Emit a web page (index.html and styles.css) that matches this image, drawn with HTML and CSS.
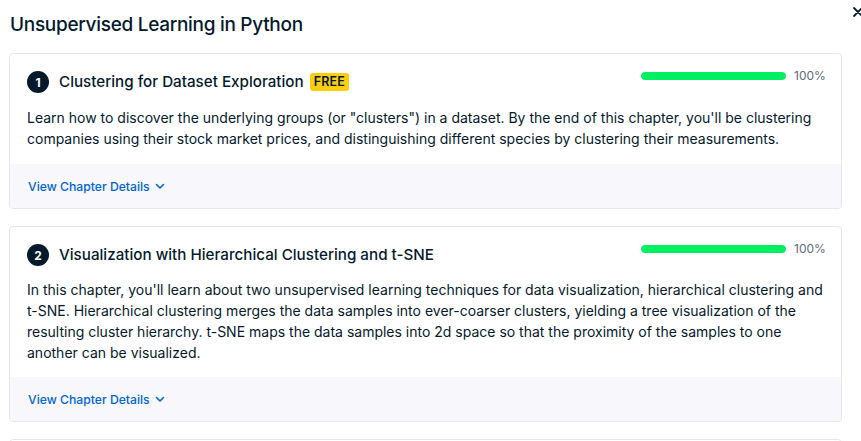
FILE: index.html
```html
<!DOCTYPE html>
<html lang="en">
<head>
<meta charset="utf-8">
<title>Unsupervised Learning in Python</title>
<link rel="stylesheet" href="styles.css">
</head>
<body>
<div class="page">
  <header class="modal-header">
    <h1 class="modal-title">Unsupervised Learning in Python</h1>
    <button class="close" aria-label="Close">
      <svg width="10" height="10" viewBox="0 0 10 10"><path d="M1 1 L9 9 M9 1 L1 9" stroke="#05192d" stroke-width="1.8" stroke-linecap="round"/></svg>
    </button>
  </header>

  <section class="chapter">
    <div class="chapter-body">
      <div class="chapter-head">
        <div class="chapter-title-wrap">
          <span class="num">1</span>
          <h2 class="chapter-title">Clustering for Dataset Exploration</h2>
          <span class="free">FREE</span>
        </div>
        <div class="progress">
          <div class="bar"><div class="fill" style="width:100%"></div></div>
          <span class="pct">100%</span>
        </div>
      </div>
      <p class="desc">Learn how to discover the underlying groups (or "clusters") in a dataset. By the end of this chapter, you'll be clustering companies using their stock market prices, and distinguishing different species by clustering their measurements.</p>
    </div>
    <div class="chapter-foot">
      <a class="details" href="#">View Chapter Details
        <svg width="10" height="7" viewBox="0 0 10 7"><path d="M1.5 1.5 L5 5 L8.5 1.5" fill="none" stroke="#0065d1" stroke-width="1.6" stroke-linecap="round" stroke-linejoin="round"/></svg>
      </a>
    </div>
  </section>

  <section class="chapter">
    <div class="chapter-body">
      <div class="chapter-head">
        <div class="chapter-title-wrap">
          <span class="num">2</span>
          <h2 class="chapter-title">Visualization with Hierarchical Clustering and t-SNE</h2>
        </div>
        <div class="progress">
          <div class="bar"><div class="fill" style="width:100%"></div></div>
          <span class="pct">100%</span>
        </div>
      </div>
      <p class="desc desc-tight">In this chapter, you'll learn about two unsupervised learning techniques for data visualization, hierarchical clustering and t-SNE. Hierarchical clustering merges the data samples into ever-coarser clusters, yielding a tree visualization of the resulting cluster hierarchy. t-SNE maps the data samples into 2d space so that the proximity of the samples to one another can be visualized.</p>
    </div>
    <div class="chapter-foot">
      <a class="details" href="#">View Chapter Details
        <svg width="10" height="7" viewBox="0 0 10 7"><path d="M1.5 1.5 L5 5 L8.5 1.5" fill="none" stroke="#0065d1" stroke-width="1.6" stroke-linecap="round" stroke-linejoin="round"/></svg>
      </a>
    </div>
  </section>

  <section class="chapter chapter-next" aria-hidden="true"></section>
</div>
</body>
</html>
```

FILE: styles.css
```css
* { box-sizing: border-box; }
html, body { margin: 0; padding: 0; background: #fff; overflow: hidden; }
body {
  font-family: Inter, "Noto Sans", sans-serif;
  color: #05192d;
}
.page {
  padding: 0 19px 0 9px;
  height: 441px;
  overflow: hidden;
}
.modal-header {
  display: flex;
  justify-content: space-between;
  align-items: flex-start;
  height: 53px;
}
.modal-title {
  margin: 11px 0 0 1px;
  font-size: 19px;
  font-weight: 500;
  line-height: 28px;
  letter-spacing: -0.3px;
}
.close {
  border: 0;
  background: none;
  padding: 0;
  margin: 7px -21px 0 0;
  width: 16px;
  height: 12px;
  display: flex;
  align-items: flex-start;
  justify-content: flex-end;
}
.chapter {
  border: 1px solid #e5e5ef;
  border-radius: 4px;
  margin-bottom: 17px;
  overflow: hidden;
}
.chapter-next {
  height: 60px;
}
.chapter-body {
  padding: 17px 16px 15px 17px;
}
.chapter-head {
  display: flex;
  justify-content: space-between;
  align-items: flex-start;
}
.chapter-title-wrap {
  display: flex;
  align-items: center;
  height: 22px;
}
.num {
  width: 22px;
  height: 22px;
  border-radius: 50%;
  background: #05192d;
  color: #fff;
  font-size: 12px;
  font-weight: 700;
  display: flex;
  align-items: center;
  justify-content: center;
  margin-right: 10px;
}
.chapter-title {
  margin: 0;
  font-size: 15.2px;
  font-weight: 500;
  line-height: 22px;
}
.free {
  margin-left: 6px;
  background: #fcce0d;
  color: #05192d;
  font-size: 12.5px;
  font-weight: 600;
  line-height: 18px;
  padding: 0 4px;
  border-radius: 3px;
  letter-spacing: 0.2px;
}
.progress {
  display: flex;
  align-items: center;
  margin-top: -3px;
}
.bar {
  width: 145px;
  height: 8px;
  background: #e5e5ef;
  border-radius: 4px;
  overflow: hidden;
}
.fill {
  height: 100%;
  background: #03ef62;
  border-radius: 4px;
}
.pct {
  margin-left: 8px;
  font-size: 12px;
  color: #5d6a77;
  width: 31px;
}
.desc {
  margin: 14px 0 0;
  font-size: 14px;
  line-height: 21px;
}
.desc-tight {
  margin-top: 13px;
  margin-bottom: -1px;
}
.chapter-foot {
  background: #f7f7fc;
  height: 44px;
  display: flex;
  align-items: center;
  padding: 0 18px;
}
.details {
  color: #0065d1;
  text-decoration: none;
  font-size: 12.2px;
  font-weight: 500;
  display: flex;
  align-items: center;
  gap: 5px;
}
```
